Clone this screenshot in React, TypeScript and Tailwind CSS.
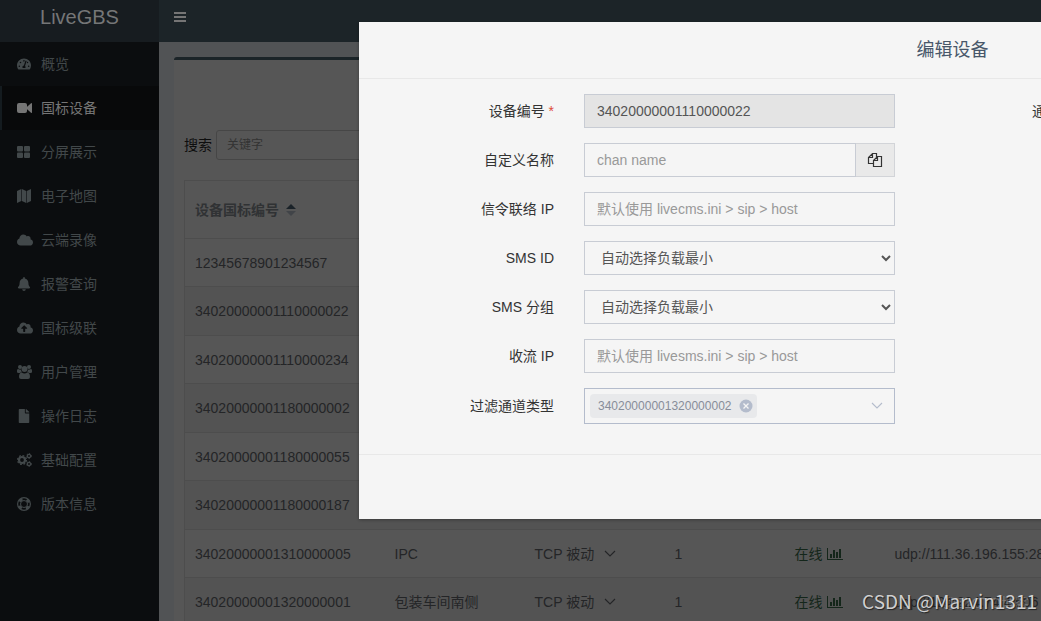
import type { ReactNode } from "react";
import {
  FaBell,
  FaCloud,
  FaCloudUploadAlt,
  FaFile,
  FaTachometerAlt,
} from "react-icons/fa";

const BarsIcon = () => (
  <svg viewBox="0 0 12 10" className="w-3 h-[10px]" fill="currentColor">
    <path d="M0 0h12v2H0zM0 4h12v2H0zM0 8h12v2H0z" />
  </svg>
);

const VideoIcon = () => (
  <svg viewBox="0 0 15 14" className="w-[15px] h-[14px]" fill="currentColor">
    <rect x="0" y="2" width="10" height="10" rx="2" />
    <path d="M9.500 6.200 14 2.300q1-.6 1 .4v8.600q0 1-1 .4L9.500 7.800z" />
  </svg>
);

const GridIcon = () => (
  <svg viewBox="0 0 13 12" className="w-[13px] h-3" fill="currentColor">
    <rect width="6" height="5.500" rx="1" />
    <rect x="7" width="6" height="5.500" rx="1" />
    <rect y="6.500" width="6" height="5.500" rx="1" />
    <rect x="7" y="6.500" width="6" height="5.500" rx="1" />
  </svg>
);

const MapIcon = () => (
  <svg viewBox="0 0 14 14" className="w-[14px] h-[14px]" fill="currentColor">
    <path d="M0 2 4.300 0v12L0 14zM4.900 0l4.300 2v12l-4.300-2zM9.800 2 14 0v12l-4.200 2z" />
  </svg>
);

const UsersIcon = () => (
  <svg viewBox="0 0 15 14" className="w-[15px] h-[14px]" fill="currentColor">
    <circle cx="3" cy="2" r="2" />
    <circle cx="12" cy="2" r="2" />
    <circle cx="7.500" cy="4" r="3" />
    <path d="M0 7V5.500Q0 4 1 4q2 1 3 .6Q4 6.300 5 7.200 3.500 7.200 2.800 8H1.500Q0 8 0 7zM15 7V5.500Q15 4 14 4q-2 1-3 .6 0 1.700-1 2.600 1.500 0 2.200.8h1.300Q15 8 15 7z" />
    <path d="M2 12q0-4.500 2.800-4.500Q6 8.500 7.500 8.500t2.700-1Q13 7.500 13 12q0 2-2 2H4q-2 0-2-2z" />
  </svg>
);

const CogsIcon = () => (
  <svg viewBox="0 0 15 14" className="w-[15px] h-[14px]" fill="none" stroke="currentColor">
    <circle cx="5" cy="7" r="3" strokeWidth="2.200" />
    <circle cx="5" cy="7" r="4.500" strokeWidth="1.200" strokeDasharray="1.800 1.730" />
    <circle cx="12" cy="3" r="1.600" strokeWidth="1.200" />
    <circle cx="12" cy="3" r="2.400" strokeWidth="1" strokeDasharray="1.300 1.210" />
    <circle cx="12" cy="11" r="1.600" strokeWidth="1.200" />
    <circle cx="12" cy="11" r="2.400" strokeWidth="1" strokeDasharray="1.300 1.210" />
  </svg>
);

const LifeRingIcon = () => (
  <svg viewBox="0 0 14 14" className="w-[14px] h-[14px]" fill="none" stroke="currentColor">
    <circle cx="7" cy="7" r="6.400" strokeWidth="1.200" />
    <circle cx="7" cy="7" r="3.500" strokeWidth="1" />
    <circle cx="7" cy="7" r="5" strokeWidth="2.600" strokeDasharray="3.500 4.354" strokeDashoffset="-2.177" />
  </svg>
);

const FilesIcon = () => (
  <svg viewBox="0 0 16 16" className="w-4 h-4" fill="none" stroke="currentColor" strokeWidth="1.200">
    <path d="M6.500 11.500h-5v-6l4-4h4v3.500M5.500 1.500v4h-4" />
    <path d="M6.500 8.500l4-4h4v10h-8zM10.500 4.500v4h-4" />
  </svg>
);

const ChartIcon = () => (
  <svg viewBox="0 0 16 14" className="w-4 h-[14px]" fill="currentColor">
    <path d="M0 1h1v11h15v1H0zM3 7h2v4H3zM6 3h2v8H6zM9 5h2v6H9zM12 2h2v9h-2z" />
  </svg>
);

const Chevron = () => (
  <svg viewBox="0 0 12 8" className="w-3 h-2" fill="none" stroke="currentColor" strokeWidth="1.100">
    <path d="M1 1l5 5 5-5" />
  </svg>
);

const menu: { text: string; icon: ReactNode; active?: boolean }[] = [
  { text: "概览", icon: <FaTachometerAlt /> },
  { text: "国标设备", icon: <VideoIcon />, active: true },
  { text: "分屏展示", icon: <GridIcon /> },
  { text: "电子地图", icon: <MapIcon /> },
  { text: "云端录像", icon: <FaCloud size={16} /> },
  { text: "报警查询", icon: <FaBell /> },
  { text: "国标级联", icon: <FaCloudUploadAlt size={16} /> },
  { text: "用户管理", icon: <UsersIcon /> },
  { text: "操作日志", icon: <FaFile /> },
  { text: "基础配置", icon: <CogsIcon /> },
  { text: "版本信息", icon: <LifeRingIcon /> },
];

const devices = [
  { id: "12345678901234567" },
  { id: "34020000001110000022" },
  { id: "34020000001110000234" },
  { id: "34020000001180000002" },
  { id: "34020000001180000055" },
  { id: "34020000001180000187" },
  { id: "34020000001310000005", name: "IPC", addr: "udp://111.36.196.155:28" },
  { id: "34020000001320000001", name: "包装车间南侧", addr: "udp://124.224.74.4:506" },
];

const Sidebar = () => (
  <aside className="w-[159px] shrink-0 bg-[#0b0d0f]">
    <a href="#" className="h-[42px] pb-2 bg-[#171c20] text-[#757677] text-xl flex items-center justify-center">
      LiveGBS
    </a>
    <nav>
      {menu.map((item) => (
        <a
          key={item.text}
          href="#"
          className={
            item.active
              ? "h-11 pl-[15px] border-l-2 border-[#141b1f] bg-[#08090a] text-[#757575] flex items-center"
              : "h-11 pl-[15px] border-l-2 border-transparent text-[#42484a] flex items-center"
          }
        >
          <span className="w-6 flex">{item.icon}</span>
          <span>{item.text}</span>
        </a>
      ))}
    </nav>
  </aside>
);

const DeviceTable = () => (
  <table className="w-[1100px] table-fixed border-collapse border border-[#4d4d4d] text-left text-[#242527]">
    <colgroup>
      <col className="w-[200px]" />
      <col className="w-[140px]" />
      <col className="w-[140px]" />
      <col className="w-[120px]" />
      <col className="w-[100px]" />
      <col />
    </colgroup>
    <thead>
      <tr className="h-[58px] border-b border-[#4d4d4d]">
        <th colSpan={6} className="px-[10px] font-bold text-[#303234]">
          <div className="flex items-center gap-[7px]">
            设备国标编号
            <svg viewBox="0 0 10 12" className="w-[10px] h-3">
              <path d="M0 5l5-5 5 5z" fill="#1a2228" />
              <path d="M0 7l5 5 5-5z" fill="#414448" />
            </svg>
          </div>
        </th>
      </tr>
    </thead>
    <tbody>
      {devices.map((d) => (
        <tr key={d.id} className="odd:h-12 even:h-[49px] even:bg-[#535353] border-b border-[#4d4d4d]">
          <td className="px-[10px]">{d.id}</td>
          <td className="px-[10px]">{d.name}</td>
          <td className="px-[10px]">
            {d.name && (
              <div className="flex items-center gap-[10px]">
                TCP 被动 <Chevron />
              </div>
            )}
          </td>
          <td className="px-[10px]">{d.name && "1"}</td>
          <td className="px-[10px]">
            {d.name && (
              <div className="flex items-center gap-1 text-[#14261a]">
                在线 <ChartIcon />
              </div>
            )}
          </td>
          <td className="px-[10px]">{d.addr}</td>
        </tr>
      ))}
    </tbody>
  </table>
);

const field = "w-full h-[34px] px-3 border border-[#c8ccd4] bg-transparent text-[#555] placeholder:text-[#999]";

const FormRow = ({ id, label, required, children }: { id: string; label: string; required?: boolean; children: ReactNode }) => (
  <div className="flex items-center gap-[30px]">
    <label htmlFor={id} className="w-[180px] text-right text-[#333]">
      {label}
      {required && <span className="text-[#dd4b39]"> *</span>}
    </label>
    <div className="w-[311px]">{children}</div>
  </div>
);

const EditDialog = () => (
  <div
    role="dialog"
    aria-label="编辑设备"
    className="absolute left-[359px] top-[22px] w-[1187px] bg-[#f5f5f5] shadow-[0_1px_3px_rgba(0,0,0,0.3)]"
  >
    <h4 className="h-[57px] border-b border-[#e8e8e8] text-lg text-[#48576a] flex items-center justify-center">
      编辑设备
    </h4>
    <div className="flex pt-[15px] pb-[30px] pl-[15px]">
      <form className="flex flex-col gap-[15px]">
        <FormRow id="serial" label="设备编号" required>
          <input id="serial" readOnly value="34020000001110000022" className="w-full h-[34px] px-3 border border-[#c8ccd4] bg-[#e4e4e4] text-[#555]" />
        </FormRow>
        <FormRow id="name" label="自定义名称">
          <div className="flex">
            <input id="name" placeholder="chan name" className={field} />
            <button type="button" aria-label="复制" className="w-[39px] h-[34px] shrink-0 border border-l-0 border-[#d2d4d8] bg-[#e9e9e9] text-[#333] flex items-center justify-center">
              <FilesIcon />
            </button>
          </div>
        </FormRow>
        <FormRow id="cms" label="信令联络 IP">
          <input id="cms" placeholder="默认使用 livecms.ini > sip > host" className={field} />
        </FormRow>
        <FormRow id="sms" label="SMS ID">
          <select id="sms" className={field}>
            <option>自动选择负载最小</option>
          </select>
        </FormRow>
        <FormRow id="group" label="SMS 分组">
          <select id="group" className={field}>
            <option>自动选择负载最小</option>
          </select>
        </FormRow>
        <FormRow id="recv" label="收流 IP">
          <input id="recv" placeholder="默认使用 livesms.ini > sip > host" className={field} />
        </FormRow>
        <FormRow id="types" label="过滤通道类型">
          <button type="button" id="types" className="w-full h-9 pl-[5px] pr-[11px] border border-[#b4bccc] text-[#b4bccc] flex items-center justify-between">
            <span className="h-6 pl-2 pr-1 rounded bg-[#e8e9eb] text-xs text-[#878d99] flex items-center gap-2">
              34020000001320000002
              <svg viewBox="0 0 14 14" className="w-[14px] h-[14px]">
                <circle cx="7" cy="7" r="6.500" fill="#b4bccc" />
                <path d="M4.500 4.500l5 5m0-5l-5 5" stroke="#f5f5f5" strokeWidth="1.300" />
              </svg>
            </span>
            <Chevron />
          </button>
        </FormRow>
      </form>
      <div className="pl-[137px] leading-[34px] text-[#333]">通道</div>
    </div>
    <div className="h-[65px] border-t border-[#e8e8e8]"></div>
  </div>
);

export default function App() {
  return (
    <div className="relative h-screen flex overflow-hidden bg-[#515355] text-sm font-['Liberation_Sans','Noto_Sans_CJK_SC',sans-serif]">
      <Sidebar />
      <div className="flex-1 min-w-0">
        <header className="h-[42px] pb-2 pl-[15px] bg-[#1c2428] flex items-center">
          <button type="button" aria-label="菜单" className="text-[#757575]">
            <BarsIcon />
          </button>
        </header>
        <main className="pt-[15px] pl-[15px]">
          <section className="border-t-3 border-[#1b2428] rounded-t-[3px] bg-[#565656] pt-[70px] pl-[10px]">
            <div className="flex items-center gap-1 mb-5">
              <label htmlFor="keyword" className="shrink-0 text-[#0e0e0e]">搜索</label>
              <input
                id="keyword"
                placeholder="关键字"
                className="w-[300px] h-[30px] px-[10px] rounded-[3px] border border-[#464646] text-xs placeholder:text-[#333]"
              />
            </div>
            <DeviceTable />
          </section>
        </main>
      </div>
      <EditDialog />
      <span className="absolute right-3 bottom-2 text-sm text-white/25">@51CTO博客</span>
      <span className="absolute right-1 bottom-1 text-[19px] leading-8 text-[#d0d0d0] font-['Noto_Sans_CJK_SC',sans-serif] [text-shadow:1px_1px_1px_#222]">
        CSDN @Marvin1311
      </span>
    </div>
  );
}
